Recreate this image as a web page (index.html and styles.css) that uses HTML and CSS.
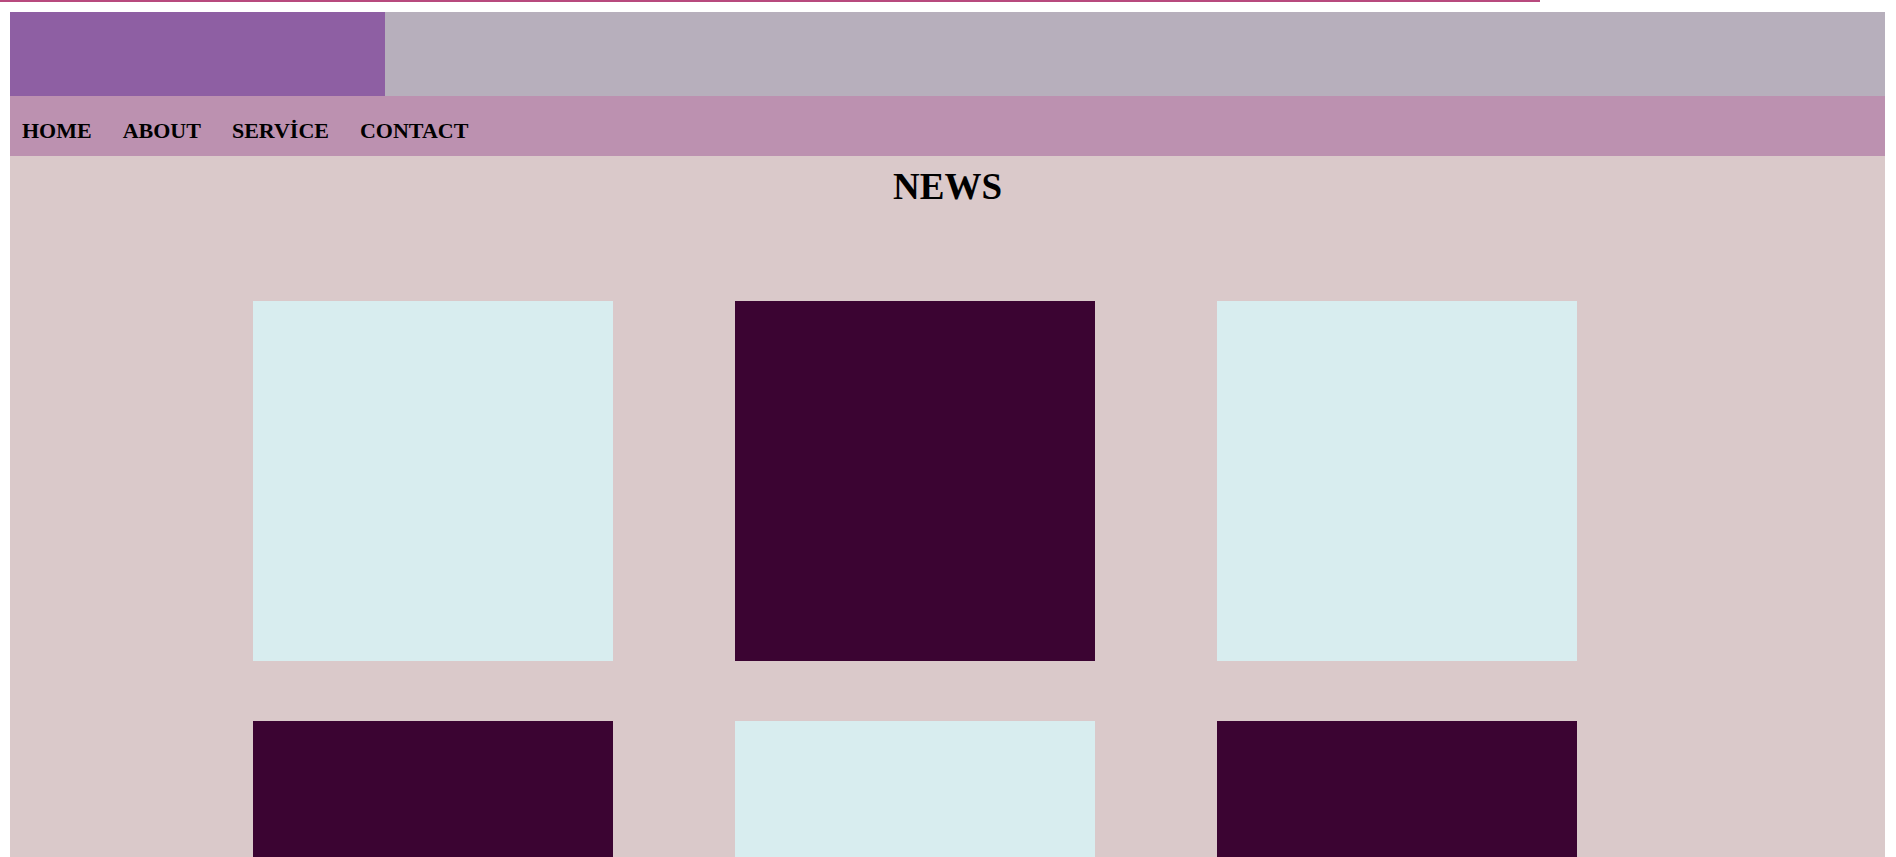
FILE: index.html
```html
<!DOCTYPE html>
<html>
<head>
    <title>News</title>
    <link rel="stylesheet" href="styles.css">
</head>
<body>
    <div class="topline"></div>
    <div class="page">
        <div class="header">
            <div class="logo"></div>
        </div>
        <ul class="menu">
            <li>HOME</li>
            <li>ABOUT</li>
            <li>SERVİCE</li>
            <li>CONTACT</li>
        </ul>
        <div class="news">
            <h1>NEWS</h1>
            <div class="grid">
                <div class="box light"></div>
                <div class="box dark"></div>
                <div class="box light"></div>
                <div class="box dark"></div>
                <div class="box light"></div>
                <div class="box dark"></div>
            </div>
        </div>
    </div>
</body>
</html>
```

FILE: styles.css
```css
body {
    margin: 0;
    padding: 0 11px 0 10px;
    font-family: "Liberation Serif", "Times New Roman", serif;
}

.topline {
    width: 1540px;
    height: 2px;
    margin-left: -10px;
    background-color: #b84a7e;
}

.page {
    margin-top: 10px;
}

.header {
    height: 84px;
    background-color: #b7afbc;
}

.logo {
    width: 375px;
    height: 84px;
    background-color: #8e5fa3;
}

.menu {
    display: flex;
    gap: 31px;
    height: 60px;
    margin: 0;
    padding: 22px 12px 0;
    box-sizing: border-box;
    list-style: none;
    background-color: #bc91b0;
    font-size: 22px;
    font-weight: bold;
}

.news {
    background-color: #dac9ca;
    padding-top: 9px;
    padding-bottom: 40px;
}

.news h1 {
    margin: 0;
    text-align: center;
    font-size: 37px;
}

.grid {
    display: grid;
    grid-template-columns: repeat(3, 360px);
    column-gap: 122px;
    row-gap: 60px;
    padding-left: 243px;
    margin-top: 93px;
}

.box {
    height: 360px;
}

.light {
    background-color: #d8edef;
}

.dark {
    background-color: #3b0432;
}
```
